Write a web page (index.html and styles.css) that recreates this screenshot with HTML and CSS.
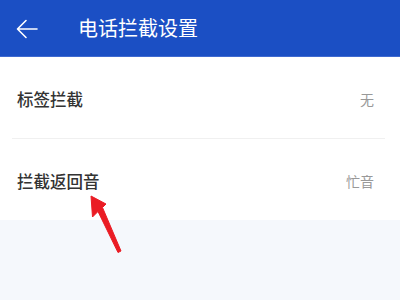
FILE: index.html
```html
<!DOCTYPE html>
<html lang="zh">
<head>
<meta charset="utf-8">
<link rel="stylesheet" href="styles.css">
</head>
<body>
<div class="page">
  <header class="topbar">
    <svg class="back" width="22" height="20" viewBox="0 0 22 20">
      <path d="M21 10 H2 M10 1.5 L1.5 10 L10 18.5" fill="none" stroke="#fff" stroke-width="1.6" stroke-linecap="round" stroke-linejoin="round"/>
    </svg>
    <h1 class="title">电话拦截设置</h1>
  </header>
  <section class="list">
    <div class="row">
      <span class="label">标签拦截</span>
      <span class="value">无</span>
    </div>
    <div class="divider"></div>
    <div class="row">
      <span class="label">拦截返回音</span>
      <span class="value">忙音</span>
    </div>
  </section>
  <div class="rest"></div>
  <svg class="pointer" width="40" height="62" viewBox="0 0 40 62">
    <path d="M1 1 L2.5 22 L8 16.5 L28 57.5 L31 56 L12.5 12.5 L16 9 Z" fill="#ea1c24" stroke="#ea1c24" stroke-width="1" stroke-linejoin="round"/>
  </svg>
</div>
</body>
</html>
```
FILE: styles.css
```css
* { box-sizing: border-box; }
html, body { margin: 0; padding: 0; }
body {
  width: 400px;
  height: 300px;
  overflow: hidden;
  font-family: "Noto Sans CJK SC", "Noto Sans", sans-serif;
  background: #f5f8fc;
}
.page { position: relative; width: 400px; height: 300px; }
.topbar {
  height: 57px;
  background: #1b4fc4;
  display: flex;
  align-items: center;
  padding-left: 16px;
  border-bottom: 1px solid #3f6ad0;
}
.back { display: block; margin-top: 1px; }
.title {
  margin: 0 0 0 40px;
  font-size: 20px;
  font-weight: 400;
  color: #fff;
  line-height: 1;
}
.list { background: #fff; }
.row {
  height: 81px;
  display: flex;
  align-items: center;
  justify-content: space-between;
  padding: 3px 26px 0 17px;
}
.label { font-size: 16.5px; font-weight: 500; color: #333; }
.value { font-size: 14px; color: #999; }
.divider {
  height: 1px;
  margin: 0 15px 0 12px;
  background: #f0f0f0;
}
.pointer {
  position: absolute;
  left: 90px;
  top: 195px;
}
```
